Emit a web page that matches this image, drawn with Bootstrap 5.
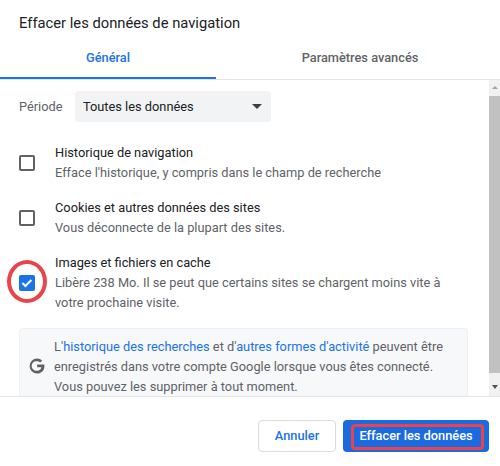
<!DOCTYPE html>
<html lang="fr">
<head>
<meta charset="utf-8">
<title>Effacer les données de navigation</title>
<link href="https://cdn.jsdelivr.net/npm/bootstrap@5.3.0/dist/css/bootstrap.min.css" rel="stylesheet">
<style>
html,body{height:466px;overflow:hidden}
body{font-family:Roboto,"Liberation Sans",sans-serif;font-size:12.8px;line-height:20px;color:#5f6368;background:#fff}
.dlg{height:466px;position:relative}
.dlg-title{font-size:14.75px;line-height:22px;color:#202124;padding:12px 19px 0;height:45px;margin:0;font-weight:400}
.dlg-tabs{height:35px;border-bottom:1px solid #e3e5e8;flex:none}
.dlg-tab{flex:1 1 0;text-align:center;font-weight:500;color:#5f6368;line-height:26px;height:34px;padding:0;margin-top:0}
.dlg-tab.on{color:#1a73e8;flex:0 0 216px;border-bottom:2px solid #1a73e8;height:34px}
.dlg-tab.off{padding-left:4px}
.dlg-body{height:316px;flex:none;overflow:hidden}
.dlg-main{flex:1 1 auto;min-width:0;padding:11px 21px 0 19px;overflow:hidden}
.per-label{width:56px}
.per-sel{width:196px;height:31px;background:#f1f3f4;border-radius:4px;color:#202124;padding:0 8px;}
.per-caret{width:0;height:0;border-left:5px solid transparent;border-right:5px solid transparent;border-top:5px solid #3c4043;margin-right:1px}
.opt{margin-bottom:15px}
.opt-first{margin-top:21px}
.opt-title{color:#202124}
.cbx{flex:0 0 16px;width:16px;height:16px;border:2px solid #5f6368;border-radius:2px;margin-right:20px;background:#fff;align-self:center}
.cbx.on{background:#1a73e8;border:0;padding:0}
.note{background:#f7f8fa;border:1px solid #eff0f2;border-bottom:0;border-radius:4px 4px 0 0;margin-top:15px;margin-right:0;padding:8px 10px 10px 9px;height:80px;width:449px}
.note a{color:#1a73e8;text-decoration:none}
.note svg{flex:none;margin:21px 9px 0 0}
.sb{flex:0 0 11px;width:11px;background:#f1f1f1}
.sb-up{width:0;height:0;border-left:3px solid transparent;border-right:3px solid transparent;border-bottom:3px solid #a3a3a3;margin:6px auto 7px}
.sb-thumb{height:277px;background:#c1c1c1}
.sb-dn{width:0;height:0;border-left:3px solid transparent;border-right:3px solid transparent;border-top:4px solid #505050;margin:12px auto 0}
.dlg-foot{height:70px;border-top:1px solid #e3e5e8;padding:23px 11px 0 0;gap:7px}
.btn-cancel{width:78px;height:32px;border:1px solid #dadce0;border-radius:4px;color:#1a73e8;background:#fff;font-size:12.8px;font-weight:500;padding:0;line-height:30px}
.btn-clear{width:146px;height:32px;border:0;border-radius:4px;color:#fff;background:#1a6ae0;font-size:12.8px;font-weight:500;padding:0;line-height:32px}
.mark-ring{position:absolute;left:7px;top:260px;width:40px;height:43px;border:4px solid #e8444a;border-radius:50%}
.mark-rect{position:absolute;left:351px;top:424px;width:133px;height:26px;border:3px solid #e8444a;border-radius:4px}
</style>
</head>
<body>
<div class="dlg d-flex flex-column">
  <h1 class="dlg-title">Effacer les données de navigation</h1>
  <div class="dlg-tabs d-flex">
    <div class="dlg-tab on">Général</div>
    <div class="dlg-tab off">Paramètres avancés</div>
  </div>
  <div class="dlg-body d-flex">
    <div class="dlg-main">
      <div class="d-flex align-items-center">
        <span class="per-label">Période</span>
        <div class="per-sel d-flex align-items-center justify-content-between"><span>Toutes les données</span><span class="per-caret"></span></div>
      </div>
      <div class="opt opt-first d-flex">
        <div class="cbx"></div>
        <div><div class="opt-title">Historique de navigation</div><div>Efface l'historique, y compris dans le champ de recherche</div></div>
      </div>
      <div class="opt d-flex">
        <div class="cbx"></div>
        <div><div class="opt-title">Cookies et autres données des sites</div><div>Vous déconnecte de la plupart des sites.</div></div>
      </div>
      <div class="d-flex">
        <div class="cbx on">
          <svg width="16" height="16" viewBox="0 0 16 16" class="d-block"><path d="M3.400 8l3 3 6-6" fill="none" stroke="#fff" stroke-width="2"/></svg>
        </div>
        <div><div class="opt-title">Images et fichiers en cache</div><div>Libère 238 Mo. Il se peut que certains sites se chargent moins vite à<br>votre prochaine visite.</div></div>
      </div>
      <div class="note d-flex">
        <svg width="16" height="16" viewBox="0 0 16 16"><path d="M8.100 6.600v2.700h4.300c-.3 1.900-1.900 3.400-4.300 3.400a4.800 4.800 0 1 1 0-9.500c1.200 0 2.300.4 3.100 1.200l2-2A7.500 7.500 0 0 0 8.100.5a7.500 7.500 0 1 0 0 15c4.300 0 7.300-3 7.300-7.300 0-.6-.1-1.100-.2-1.600z" fill="#5f6368"/></svg>
        <div>L'<a href="#">historique des recherches</a> et d'<a href="#">autres formes d'activité</a> peuvent être enregistrés dans votre compte Google lorsque vous êtes connecté. Vous pouvez les supprimer à tout moment.</div>
      </div>
    </div>
    <div class="sb">
      <div class="sb-up"></div>
      <div class="sb-thumb"></div>
      <div class="sb-dn"></div>
    </div>
  </div>
  <div class="dlg-foot d-flex justify-content-end align-items-start">
    <button type="button" class="btn btn-cancel">Annuler</button>
    <button type="button" class="btn btn-clear">Effacer les données</button>
  </div>
  <div class="mark-ring"></div>
  <div class="mark-rect"></div>
</div>
<script src="https://cdn.jsdelivr.net/npm/bootstrap@5.3.0/dist/js/bootstrap.bundle.min.js"></script>
</body>
</html>
